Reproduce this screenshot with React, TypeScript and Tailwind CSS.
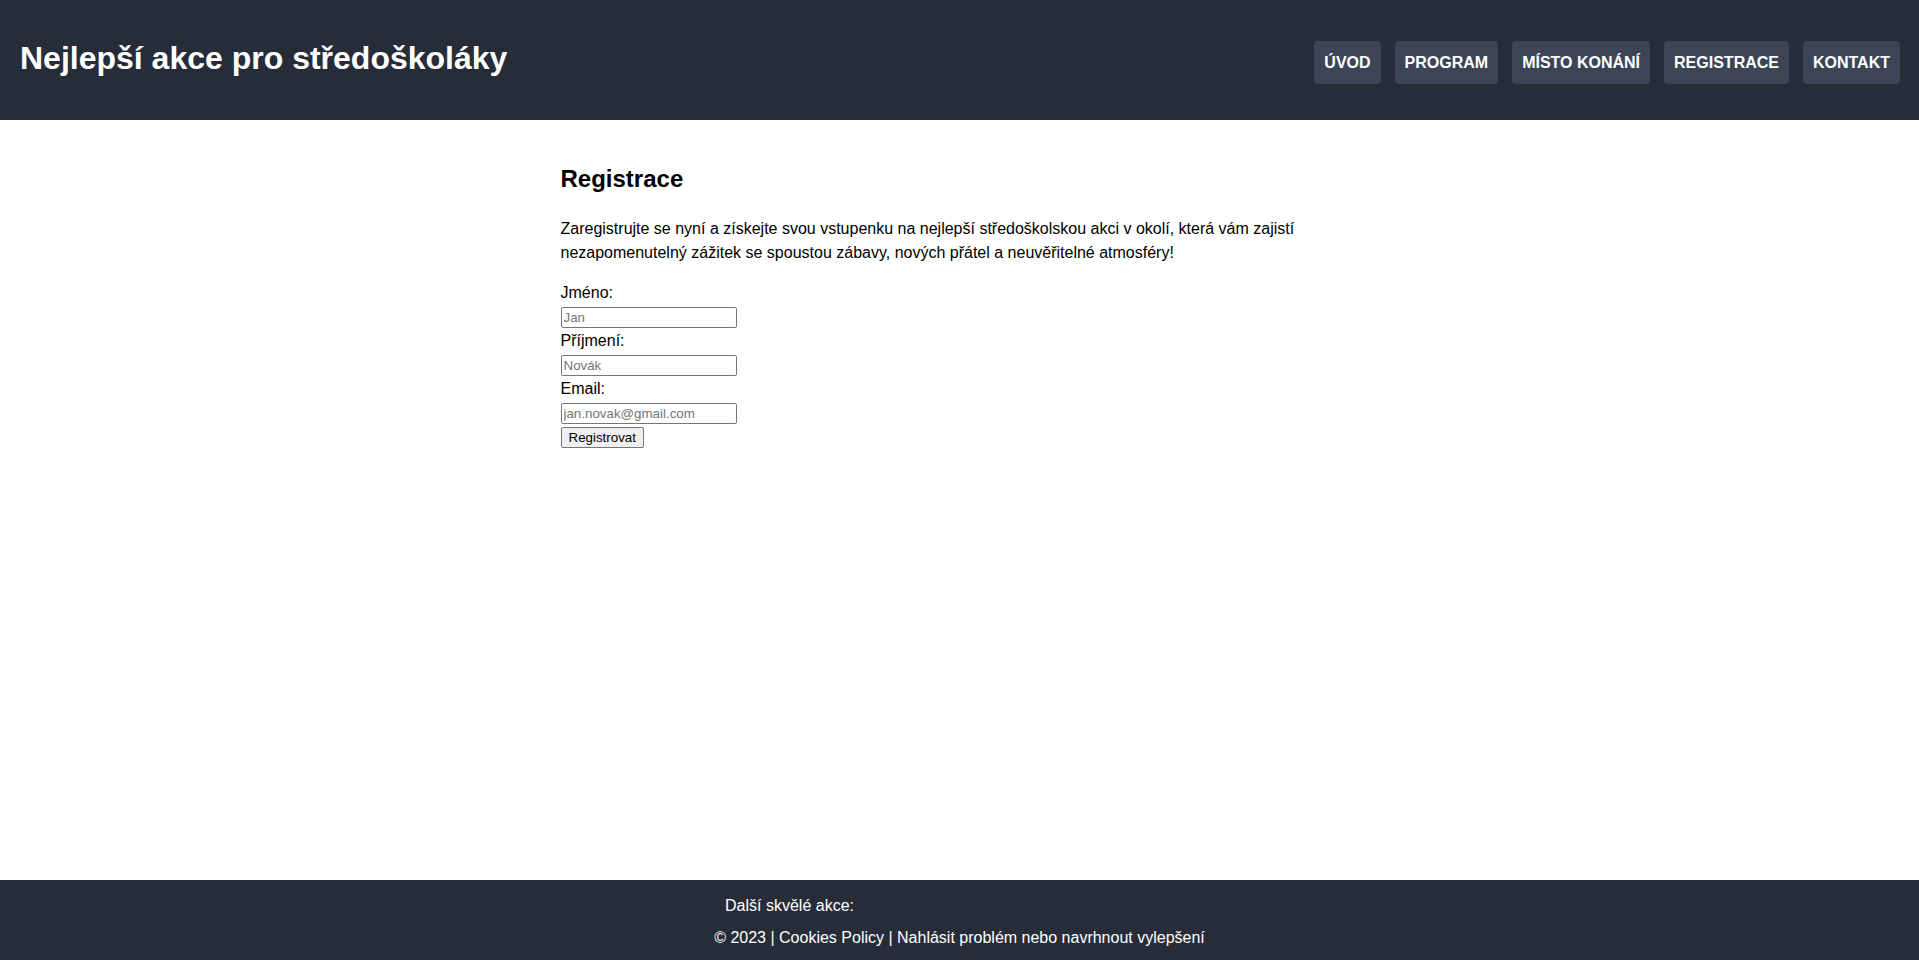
import React from "react";

const navItems = ["ÚVOD", "PROGRAM", "MÍSTO KONÁNÍ", "REGISTRACE", "KONTAKT"];

const fields = [
  { label: "Jméno:", placeholder: "Jan", type: "text" },
  { label: "Příjmení:", placeholder: "Novák", type: "text" },
  { label: "Email:", placeholder: "jan.novak@gmail.com", type: "email" },
];

export default function App() {
  return (
    <div className="min-h-screen flex flex-col bg-white text-black font-['Liberation_Sans',Arial,sans-serif] text-[16px] leading-6">
      <header className="h-[120px] shrink-0 bg-[#262d39] flex justify-between pl-5 pr-[19px]">
        <h1 className="mt-[40px] text-[32px] leading-[37px] font-bold text-white">
          Nejlepší akce pro středoškoláky
        </h1>
        <nav className="mt-[41px] flex gap-[14px] items-start">
          {navItems.map((item) => (
            <a
              key={item}
              href="#"
              className="h-[43px] px-[10px] flex items-center rounded-[4px] bg-[#3b4555] text-white font-bold text-[16px] leading-[18px]"
            >
              {item}
            </a>
          ))}
        </nav>
      </header>

      <main className="flex-1 pt-[41px]">
        <div className="w-[800px] mx-auto pl-px">
          <h2 className="text-[24px] leading-[36px] font-bold">Registrace</h2>
          <p className="mt-[20px] mb-[16px] leading-6">
            Zaregistrujte se nyní a získejte svou vstupenku na nejlepší středoškolskou akci v okolí, která vám
            zajistí nezapomenutelný zážitek se spoustou zábavy, nových přátel a neuvěřitelné atmosféry!
          </p>
          <form className="flex flex-col" onSubmit={(e) => e.preventDefault()}>
            {fields.map((f) => (
              <React.Fragment key={f.label}>
                <label className="block h-6 leading-6">{f.label}</label>
                <div className="h-6">
                  <input
                    type={f.type}
                    placeholder={f.placeholder}
                    className="mt-[2px] block w-[176px] h-[21px] border border-[#767676] rounded-[2px] px-[2px] py-[1px] text-[13.333px] leading-[15px] bg-white placeholder:text-[#757575] font-['Liberation_Sans',Arial,sans-serif]"
                  />
                </div>
              </React.Fragment>
            ))}
            <div className="h-6">
              <button
                type="submit"
                className="mt-[2px] block h-[21px] px-[7px] border border-[#767676] rounded-[2px] bg-[#efefef] text-[13.333px] leading-[15px] text-black font-['Liberation_Sans',Arial,sans-serif]"
              >
                Registrovat
              </button>
            </div>
          </form>
        </div>
      </main>

      <footer className="h-[80px] shrink-0 bg-[#262d39] text-white pt-[14px] flex flex-col items-center gap-2">
        <div className="flex justify-center leading-6">
          <span>Další skvělé akce:</span>
          <span className="w-[340px]" />
        </div>
        <div className="leading-6">
          © 2023 | <a href="#">Cookies Policy</a> | <a href="#">Nahlásit problém nebo navrhnout vylepšení</a>
        </div>
      </footer>
    </div>
  );
}
